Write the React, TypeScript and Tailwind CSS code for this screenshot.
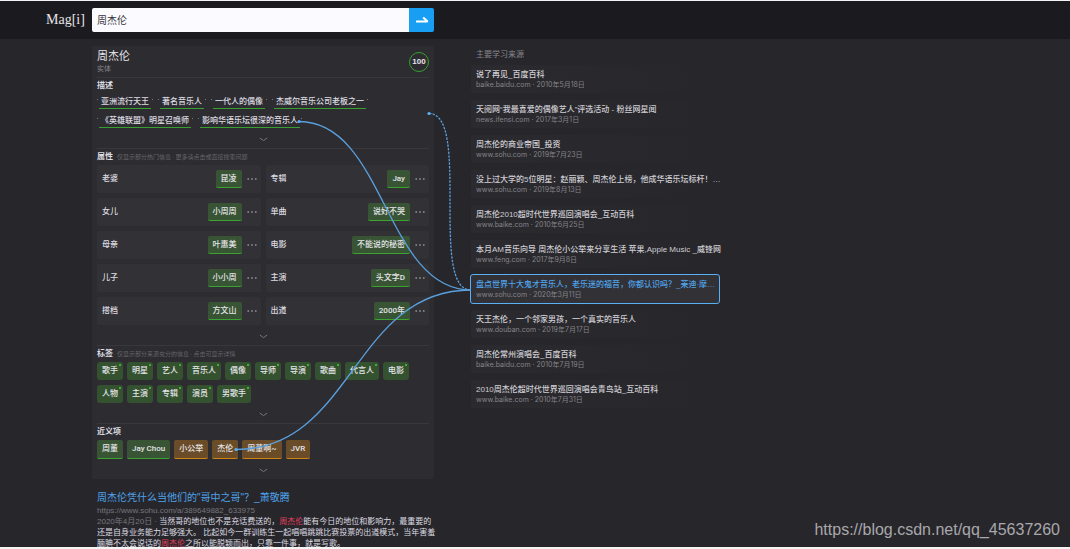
import { useState } from 'react';

interface Attribute {
    name: string;
    value: string;
}

interface Source {
    title: string;
    site: string;
    date: string;
}

const facts = [
    ['亚洲流行天王', '著名音乐人', '一代人的偶像', '杰威尔音乐公司老板之一'],
    ['《英雄联盟》明星召唤师', '影响华语乐坛很深的音乐人'],
];

const attributes: Attribute[] = [
    { name: '老婆', value: '昆凌' },
    { name: '专辑', value: 'Jay' },
    { name: '女儿', value: '小周周' },
    { name: '单曲', value: '说好不哭' },
    { name: '母亲', value: '叶惠美' },
    { name: '电影', value: '不能说的秘密' },
    { name: '儿子', value: '小小周' },
    { name: '主演', value: '头文字D' },
    { name: '搭档', value: '方文山' },
    { name: '出道', value: '2000年' },
];

const tags = [
    ['歌手', '明星', '艺人', '音乐人', '偶像', '导师', '导演', '歌曲', '代言人', '电影'],
    ['人物', '主演', '专辑', '演员', '男歌手'],
];

const synonyms = [
    { text: '周董', sure: true },
    { text: 'Jay Chou', sure: true },
    { text: '小公举', sure: false },
    { text: '杰伦', sure: false },
    { text: '周董啊~', sure: false },
    { text: 'JVR', sure: false },
];

const sources: Source[] = [
    { title: '说了再见_百度百科', site: 'baike.baidu.com', date: '2010年5月18日' },
    { title: '天阅网“我最喜爱的偶像艺人”评选活动 - 粉丝网星闻', site: 'news.ifensi.com', date: '2017年3月1日' },
    { title: '周杰伦的商业帝国_投资', site: 'www.sohu.com', date: '2019年7月23日' },
    { title: '没上过大学的5位明星：赵丽颖、周杰伦上榜，他成华语乐坛标杆！…', site: 'www.sohu.com', date: '2019年8月13日' },
    { title: '周杰伦2010超时代世界巡回演唱会_互动百科', site: 'www.baike.com', date: '2010年6月25日' },
    { title: '本月AM音乐向导 周杰伦小公举来分享生活 苹果,Apple Music _威锋网', site: 'www.feng.com', date: '2017年9月8日' },
    { title: '盘点世界十大鬼才音乐人，老乐迷的福音，你都认识吗？_莱迪·摩…', site: 'www.sohu.com', date: '2020年3月11日' },
    { title: '天王杰伦，一个邻家男孩，一个真实的音乐人', site: 'www.douban.com', date: '2019年7月17日' },
    { title: '周杰伦常州演唱会_百度百科', site: 'baike.baidu.com', date: '2010年7月19日' },
    { title: '2010周杰伦超时代世界巡回演唱会青鸟站_互动百科', site: 'www.baike.com', date: '2010年7月31日' },
];

const MoreButton = () => (
    <button aria-label="展开" className="flex h-5 w-full items-center justify-center pt-[2px]">
        <svg width="9" height="5" viewBox="0 0 9 5" fill="none" stroke="#77767b">
            <path d="M0.8 1 L4.5 3.6 L8.2 1" />
        </svg>
    </button>
);

const SectionTitle = ({ title, hint }: { title: string; hint?: string }) => (
    <div className="mt-[3px] flex h-[10px] items-center gap-1 leading-[10px]">
        <h3 className="text-[8px] font-bold text-[#dddce1]">{title}</h3>
        {hint && <span className="text-[6px] text-[#66656a]">{hint}</span>}
    </div>
);

const Header = () => {
    const [query, setQuery] = useState('周杰伦');

    return (
        <header className="flex h-[38px] shrink-0 items-center bg-[#1b1a1f] pl-[46px]">
            <a href="#" className="w-[46px] font-['Liberation_Serif',serif] text-[14px] leading-4 text-[#e6e5ea]">
                Mag[i]
            </a>
            <form className="flex h-6 w-[342px] overflow-hidden rounded-[2px]" onSubmit={(e) => e.preventDefault()}>
                <input
                    aria-label="搜索"
                    value={query}
                    onChange={(e) => setQuery(e.target.value)}
                    className="min-w-0 flex-1 bg-[#fbfaff] px-[5px] text-[10px] text-[#333238] outline-none"
                />
                <button aria-label="提交" className="flex w-[25px] items-center justify-center bg-[#189ff3]">
                    <svg width="14" height="8" viewBox="0 0 14 8" fill="none" stroke="#ffffff" strokeWidth="2">
                        <path d="M1 5.6 H12.6 L8.2 1.6" strokeLinejoin="bevel" />
                    </svg>
                </button>
            </form>
        </header>
    );
};

const Fact = ({ text }: { text: string }) => (
    <a
        href="#"
        className="relative h-[14px] border-b border-[#36a02e] px-[2px] text-[8px] leading-[13px] font-medium whitespace-nowrap text-[#dddce1]"
    >
        {text}
        <span className="absolute top-1 left-[-2px] size-px bg-[#77767b]" />
        <span className="absolute top-1 right-[-2px] size-px bg-[#77767b]" />
    </a>
);

const AttributeRow = ({ name, value }: Attribute) => (
    <div className="flex h-7 items-center rounded-[2px] bg-[#323136] pr-1 pl-[5px]">
        <span className="flex-1 text-[8px] font-medium text-[#dddce1]">{name}</span>
        <button className="h-[18px] rounded-[2px] border-b border-[#3ba32f] bg-[#385434] px-[5px] text-[8px] font-medium text-[#e6e5ea]">
            {value}
        </button>
        <button aria-label="更多" className="ml-[5px]">
            <svg width="10" height="4" viewBox="0 0 10 4" fill="#88878c">
                <circle cx="1.2" cy="2" r="0.9" />
                <circle cx="5" cy="2" r="0.9" />
                <circle cx="8.8" cy="2" r="0.9" />
            </svg>
        </button>
    </div>
);

const EntityCard = () => (
    <section className="rounded-[2px] bg-[#2d2c31] px-[5px]">
        <div className="flex h-8 items-center justify-between border-b border-[#38373c]">
            <div>
                <h1 className="text-[11px] leading-[14px] text-[#e6e5ea]">周杰伦</h1>
                <p className="text-[7px] leading-[10px] text-[#88878c]">实体</p>
            </div>
            <div className="flex size-5 items-center justify-center rounded-full border border-[#36a02e] font-['Liberation_Sans',sans-serif] text-[8px] font-bold text-[#e6e5ea]">
                100
            </div>
        </div>

        <SectionTitle title="描述" />
        <div className="mt-1 space-y-[5px]">
            {facts.map((row) => (
                <div key={row[0]} className="flex gap-[9px] pl-[2px]">
                    {row.map((fact) => (
                        <Fact key={fact} text={fact} />
                    ))}
                </div>
            ))}
        </div>
        <MoreButton />

        <div className="border-t border-[#38373c]">
            <SectionTitle title="属性" hint="仅显示部分热门信息 · 更多请点击或直接搜索问题" />
            <div className="mt-[3px] grid grid-cols-2 gap-[5px]">
                {attributes.map((item) => (
                    <AttributeRow key={item.name} name={item.name} value={item.value} />
                ))}
            </div>
            <MoreButton />
        </div>

        <div className="border-t border-[#38373c]">
            <SectionTitle title="标签" hint="仅显示部分来源充分的信息 · 点击可显示详情" />
            <div className="mt-[3px] space-y-[5px]">
                {tags.map((row) => (
                    <div key={row[0]} className="flex gap-1">
                        {row.map((tag) => (
                            <button
                                key={tag}
                                className="relative h-[18px] rounded-[3px] bg-[#34522f] px-[5px] text-[8px] font-medium text-[#e6e5ea]"
                            >
                                {tag}
                                <span className="absolute top-[2px] right-[2px] size-[2px] bg-[#3cb02f]" />
                            </button>
                        ))}
                    </div>
                ))}
            </div>
            <MoreButton />
        </div>

        <div className="border-t border-[#38373c]">
            <SectionTitle title="近义项" />
            <div className="mt-[3px] flex gap-1">
                {synonyms.map(({ text, sure }) => (
                    <button
                        key={text}
                        className={`h-[19px] rounded-[2px] border-b px-[5px] text-[8px] font-medium text-[#e6e5ea] ${
                            sure ? 'border-[#3ba32f] bg-[#385434]' : 'border-[#d08410] bg-[#6a4d28]'
                        }`}
                    >
                        {text}
                    </button>
                ))}
            </div>
            <MoreButton />
        </div>
    </section>
);

const SearchResult = () => (
    <article className="mt-[11px] px-[5px] font-['Liberation_Sans','Noto_Sans_CJK_SC',sans-serif] whitespace-nowrap">
        <h2 className="text-[10px] leading-[15px]">
            <a href="#" className="text-[#4ea3ea]">
                周杰伦凭什么当他们的"哥中之哥"？_萧敬腾
            </a>
        </h2>
        <p className="text-[8px] leading-[11px] text-[#77767b]">https://www.sohu.com/a/389649882_633975</p>
        <p className="text-[8px] leading-[11px] text-[#dddce1]">
            <span className="text-[#77767b]">2020年4月20日 · </span>
            当然哥的地位也不是充话费送的，<em className="text-[#e0405e] not-italic">周杰伦</em>能有今日的地位和影响力，最重要的
            <br />
            还是自身业务能力足够强大。 比起如今一群训练生一起唱唱跳跳比赛投票的出道模式，当年害羞
            <br />
            腼腆不太会说话的<em className="text-[#e0405e] not-italic">周杰伦</em>之所以能脱颖而出，只靠一件事，就是写歌。
        </p>
    </article>
);

const SourceList = () => {
    const [active, setActive] = useState(6);

    return (
        <aside className="w-[248px] pt-[3px]">
            <h2 className="pl-[5px] text-[8px] leading-[11px] text-[#88878c]">主要学习来源</h2>
            <ul className="mt-[5px] space-y-[7px]">
                {sources.map((source, i) => (
                    <li key={source.title}>
                        <a
                            href="#"
                            onClick={() => setActive(i)}
                            className={`flex h-7 flex-col justify-center rounded-[2px] px-[5px] whitespace-nowrap ${
                                i === active
                                    ? 'bg-[#323136] outline outline-[#5ab0f5]'
                                    : 'bg-linear-to-r from-[#2b2a2f] to-[#27262b]'
                            }`}
                        >
                            <span
                                className={`font-['Liberation_Sans','Noto_Sans_CJK_SC',sans-serif] text-[8px] leading-[11px] font-medium ${
                                    i === active ? 'text-[#4ea3ea]' : 'text-[#cfced3]'
                                }`}
                            >
                                {source.title}
                            </span>
                            <span className="font-[Inter,'Noto_Sans_CJK_SC',sans-serif] text-[7px] leading-[10px] text-[#858489]">
                                {source.site} · {source.date}
                            </span>
                        </a>
                    </li>
                ))}
            </ul>
        </aside>
    );
};

// Curves that tie the facts on the left to the selected source
const Links = () => (
    <svg
        className="pointer-events-none absolute top-0 left-0"
        width="720"
        height="547"
        viewBox="0 0 720 547"
        fill="none"
        stroke="#5a9fdc"
        strokeWidth="1.3"
    >
        <path d="M299 120.5 C385 120.5 385 289 471 289" />
        <path d="M236 448.5 C353 448.5 353 289 471 289" />
        <path d="M429 112.5 C471 112.5 429 289 471 289" strokeDasharray="2.4 1.2" />
        <g fill="#5ab0f5" stroke="none">
            <circle cx="299" cy="120.5" r="1.6" />
            <circle cx="236" cy="448.5" r="1.6" />
            <circle cx="429" cy="112.5" r="1.6" />
        </g>
    </svg>
);

const App = () => {
    return (
        <div className="relative flex h-screen flex-col overflow-hidden border-t border-b-2 border-t-[#f4f4f4] border-b-[#f4f4f4] bg-[#27262b] font-[Roboto,'Noto_Sans_CJK_SC',sans-serif]">
            <Header />
            <main className="flex min-h-0 flex-1 gap-[37px] pt-[7px] pl-[92px]">
                <div className="w-[342px] shrink-0">
                    <EntityCard />
                    <SearchResult />
                </div>
                <SourceList />
            </main>
            <Links />
            <span className="absolute right-[10px] bottom-[7px] font-['Liberation_Sans',sans-serif] text-[16px] leading-5 text-[#a9a8ab]">
                https://blog.csdn.net/qq_45637260
            </span>
        </div>
    );
};

export default App;
